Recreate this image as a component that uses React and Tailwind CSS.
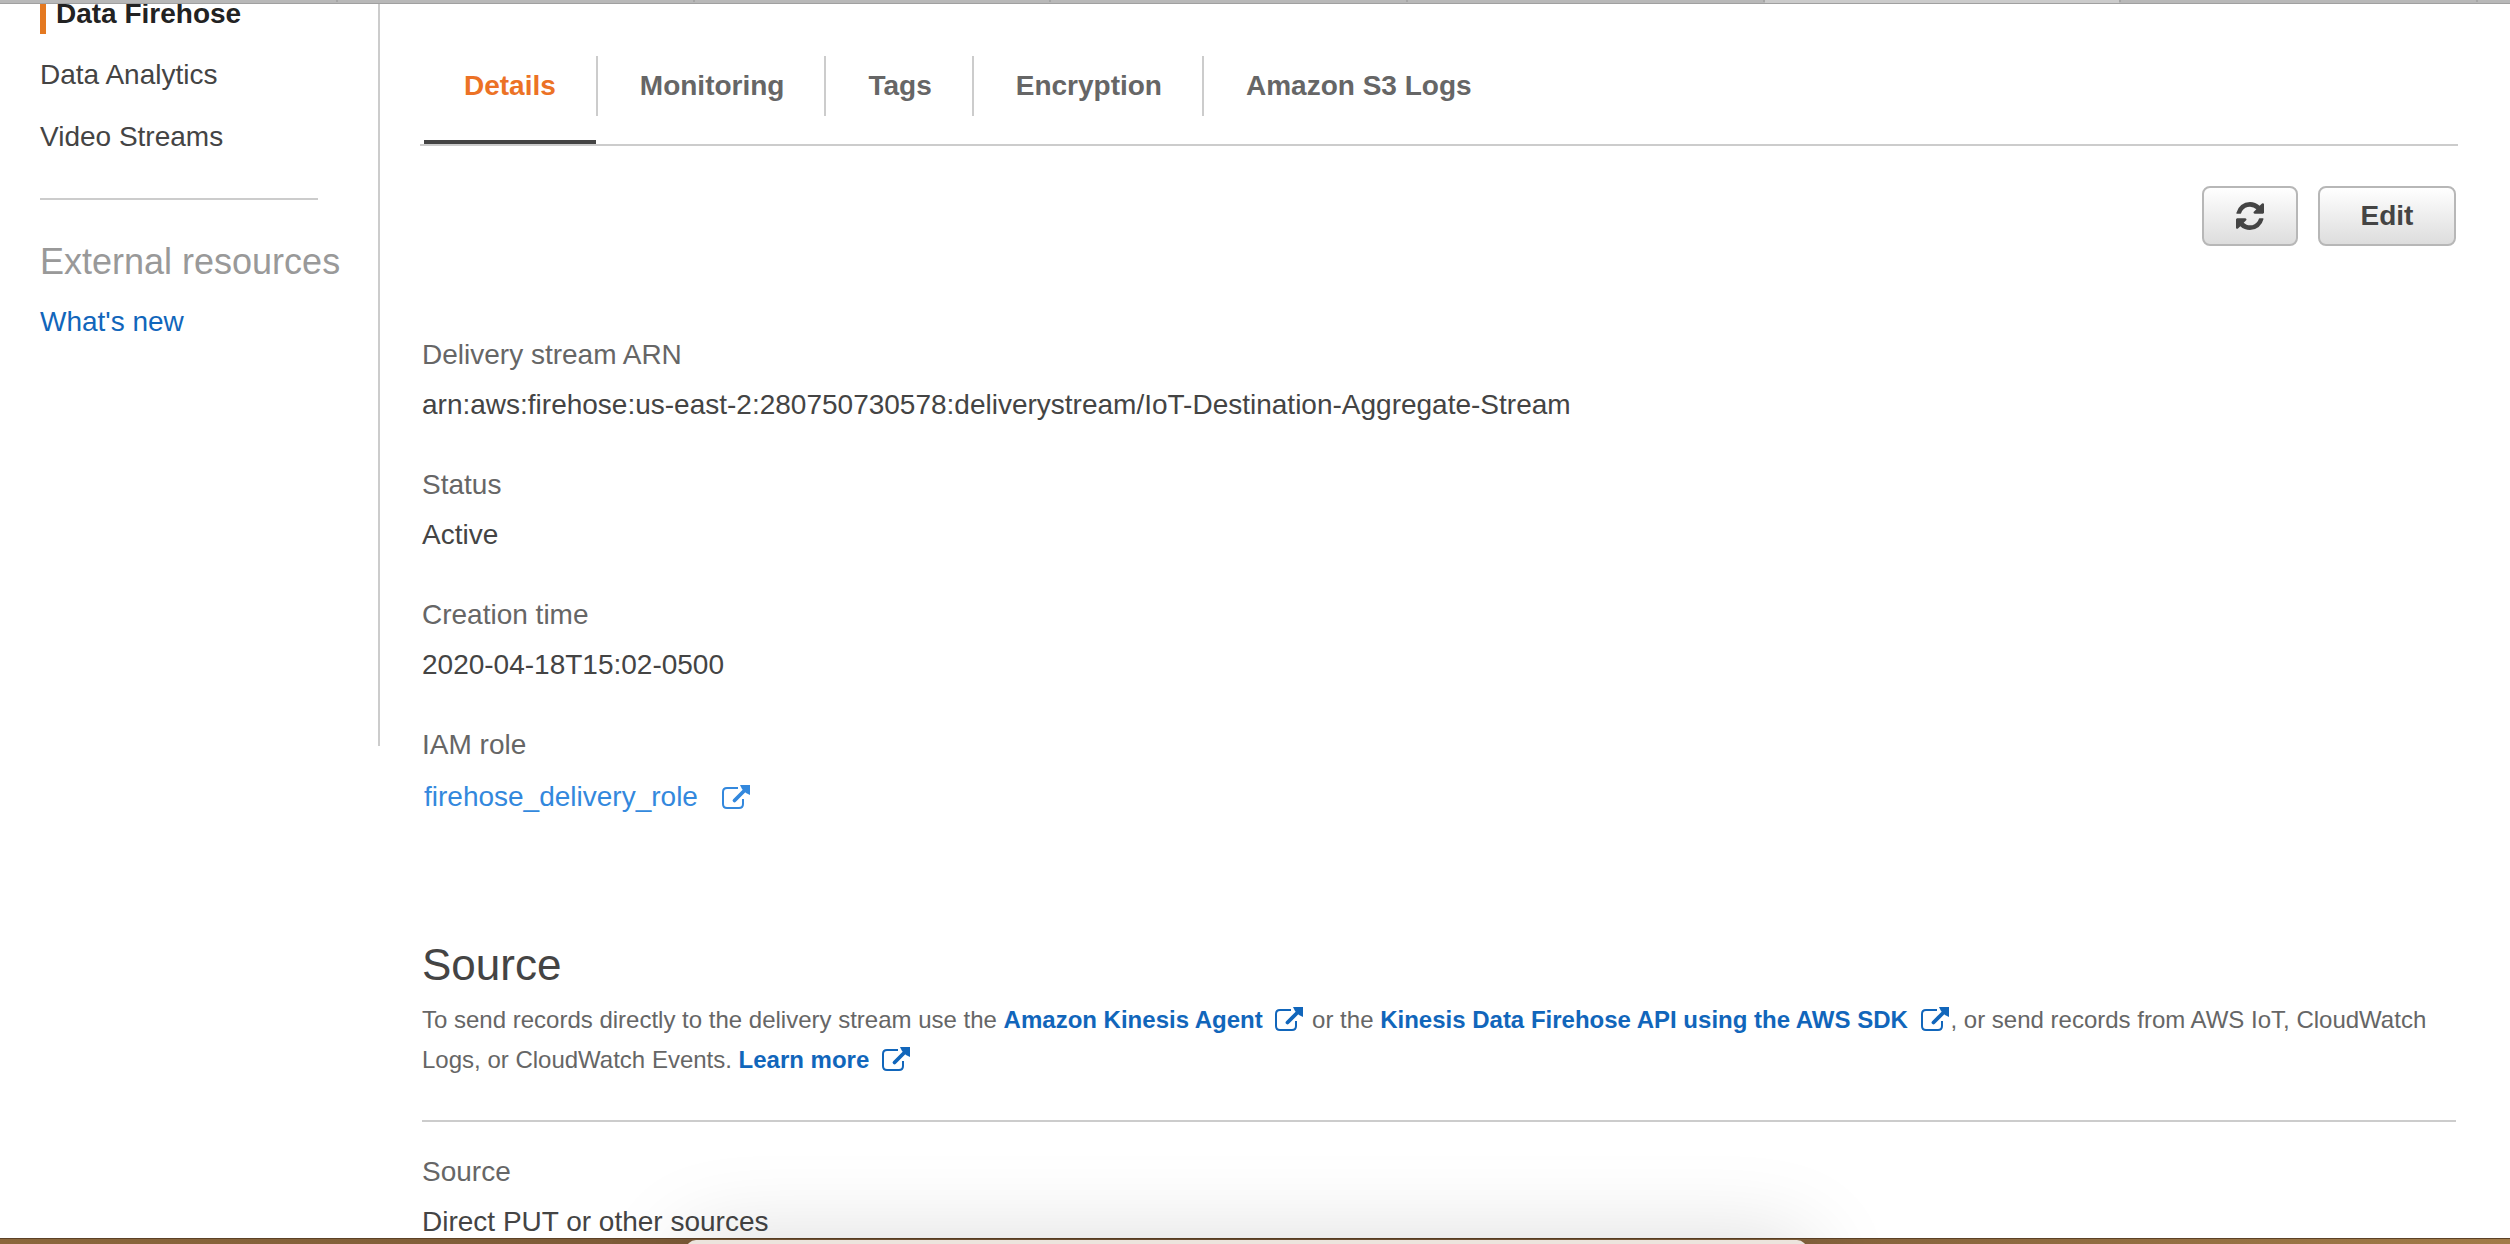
const tabs = ["Details", "Monitoring", "Tags", "Encryption", "Amazon S3 Logs"];

const fields = [
  ["Delivery stream ARN", "arn:aws:firehose:us-east-2:280750730578:deliverystream/IoT-Destination-Aggregate-Stream"],
  ["Status", "Active"],
  ["Creation time", "2020-04-18T15:02-0500"],
];

function ExternalIcon({ className = "" }) {
  return (
    <svg viewBox="0 0 28 24" className={"inline-block h-6 w-7 " + className} aria-hidden="true">
      <path d="M16 3H5Q1 3 1 7v12q0 4 4 4h12q4 0 4-4v-5" fill="none" stroke="currentColor" strokeWidth="2" />
      <path d="M12.500 15.500 23 5" fill="none" stroke="currentColor" strokeWidth="3.8" strokeLinecap="round" />
      <path d="M18 0h10v10l-4-2-4-4z" fill="currentColor" />
    </svg>
  );
}

function RefreshIcon() {
  return (
    <svg viewBox="0 0 1536 1536" className="size-7" fill="currentColor" aria-hidden="true">
      <path d="M1511 928q0 5-1 7-64 268-268 434.500t-478 166.500q-146 0-282.500-55t-243.500-157l-129 129q-19 19-45 19t-45-19-19-45v-448q0-26 19-45t45-19h448q26 0 45 19t19 45-19 45l-137 137q71 66 161 102t187 36q134 0 250-65t186-179q11-17 53-117 8-23 30-23h192q13 0 22.500 9.500t9.500 22.500zm25-800v448q0 26-19 45t-45 19h-448q-26 0-45-19t-19-45 19-45l138-138q-148-137-349-137-134 0-250 65t-186 179q-11 17-53 117-8 23-30 23h-199q-13 0-22.500-9.500t-9.500-22.500v-7q65-268 270-434.500t480-166.500q146 0 284 55.500t245 156.500l130-129q19-19 45-19t45 19 19 45z" />
    </svg>
  );
}

function DocLink({ children }) {
  return (
    <a href="#" className="font-bold text-[#1166bb]">
      {children} <ExternalIcon className="mr-0.5 ml-1.5 align-[-3px]" />
    </a>
  );
}

function Field({ label, children }) {
  return (
    <div className="flex flex-col gap-2.5">
      <dt className="text-[#666]">{label}</dt>
      <dd>{children}</dd>
    </div>
  );
}

const buttonClass =
  "flex h-15 items-center justify-center rounded-lg border-2 border-[#b7b7b7] bg-linear-to-b from-white to-[#dddddd] font-bold";

const browserTab = "h-[2px] border-r-2 border-[#a6a6a6]";

export default function App() {
  return (
    <div className="relative flex h-screen flex-col overflow-hidden bg-white font-['Liberation_Sans',Arial,sans-serif] text-[28px] leading-10 text-[#444]">
      <div className="flex h-1 shrink-0 border-b border-[#a0a0a0] bg-[#b8b8b8]">
        <div className={browserTab + " w-[338px]"} />
        <div className={browserTab + " flex-1"} />
        <div className={browserTab + " flex-1"} />
        <div className={browserTab + " flex-1"} />
        <div className={browserTab + " flex-1"} />
        <div className="h-[3px] flex-1 bg-[#cbcbcb]" />
        <div className={browserTab + " flex-1 border-l-2"} />
        <div className="w-[32px]" />
      </div>

      <div className="flex min-h-0 flex-1 items-start overflow-hidden">
        <aside className="h-[742px] w-[380px] shrink-0 border-r-2 border-[#ccc] pl-10">
          <nav className="flex flex-col">
            <a href="#" aria-current="page" className="-mt-2.5 flex h-10 items-center border-l-6 border-[#e47921] pl-2.5 font-bold text-[#222]">
              Data Firehose
            </a>
            <a href="#" className="mt-[21px]">Data Analytics</a>
            <a href="#" className="mt-[22px]">Video Streams</a>
          </nav>
          <hr className="mt-[41px] mr-15 border-t-2 border-[#ccc]" />
          <h2 className="mt-10 text-4xl leading-11 whitespace-nowrap text-[#999]">External resources</h2>
          <a href="#" className="mt-[18px] block text-[#1166bb]">What's new</a>
        </aside>

        <main className="min-w-0 flex-1 pr-[54px] pl-[42px]">
          <div role="tablist" className="-mx-0.5 flex gap-0.5 border-b-2 border-[#ccc] pt-[52px] pl-1">
            {tabs.map((tab, i) => (
              <button
                key={tab}
                role="tab"
                aria-selected={i === 0}
                className={i === 0 ? "flex flex-col font-bold text-[#ec7225]" : "flex flex-col font-bold text-[#666]"}
              >
                <span className={i < tabs.length - 1 ? "flex h-15 items-center border-r-2 border-[#ccc] px-10" : "flex h-15 items-center px-10"}>
                  {tab}
                </span>
                <span className="flex h-7 w-full items-end pr-0.5">
                  {i === 0 && <span className="h-1 w-full bg-[#444]" />}
                </span>
              </button>
            ))}
          </div>

          <div className="mt-10 flex justify-end gap-5">
            <button aria-label="Refresh" className={buttonClass + " w-24"}>
              <RefreshIcon />
            </button>
            <button className={buttonClass + " min-w-[138px] px-9"}>Edit</button>
          </div>

          <dl className="mt-[89px] flex flex-col gap-10">
            {fields.map(([label, value]) => (
              <Field key={label} label={label}>{value}</Field>
            ))}
            <Field label="IAM role">
              <a href="#" className="flex items-center gap-6 pt-0.5 pl-0.5 text-[#3388dd]">
                firehose_delivery_role
                <ExternalIcon />
              </a>
            </Field>
          </dl>

          <section className="mt-[122px]">
            <h1 className="text-[44px] leading-[52px] font-normal">Source</h1>
            <p className="mt-[9px] border-b-2 border-[#ccc] pb-10 text-2xl leading-10 text-[#666]">
              To send records directly to the delivery stream use the <DocLink>Amazon Kinesis Agent</DocLink> or the{" "}
              <DocLink>Kinesis Data Firehose API using the AWS SDK</DocLink>, or send records from AWS IoT, CloudWatch
              Logs, or CloudWatch Events. <DocLink>Learn more</DocLink>
            </p>
            <dl className="mt-[30px]">
              <Field label="Source">Direct PUT or other sources</Field>
            </dl>
          </section>
        </main>
      </div>

      <div className="h-1.5 shrink-0 border-t border-[#5d4227] bg-linear-to-r from-[#8b673c] via-[#6f5033] to-[#a17b48]" />
      <div className="absolute -bottom-25 left-1/2 -ml-[569px] h-26 w-[1121px] rounded-t-[10px] bg-[#ece4dd] shadow-[0_0_90px_rgba(0,0,0,0.15)]" />
    </div>
  );
}
